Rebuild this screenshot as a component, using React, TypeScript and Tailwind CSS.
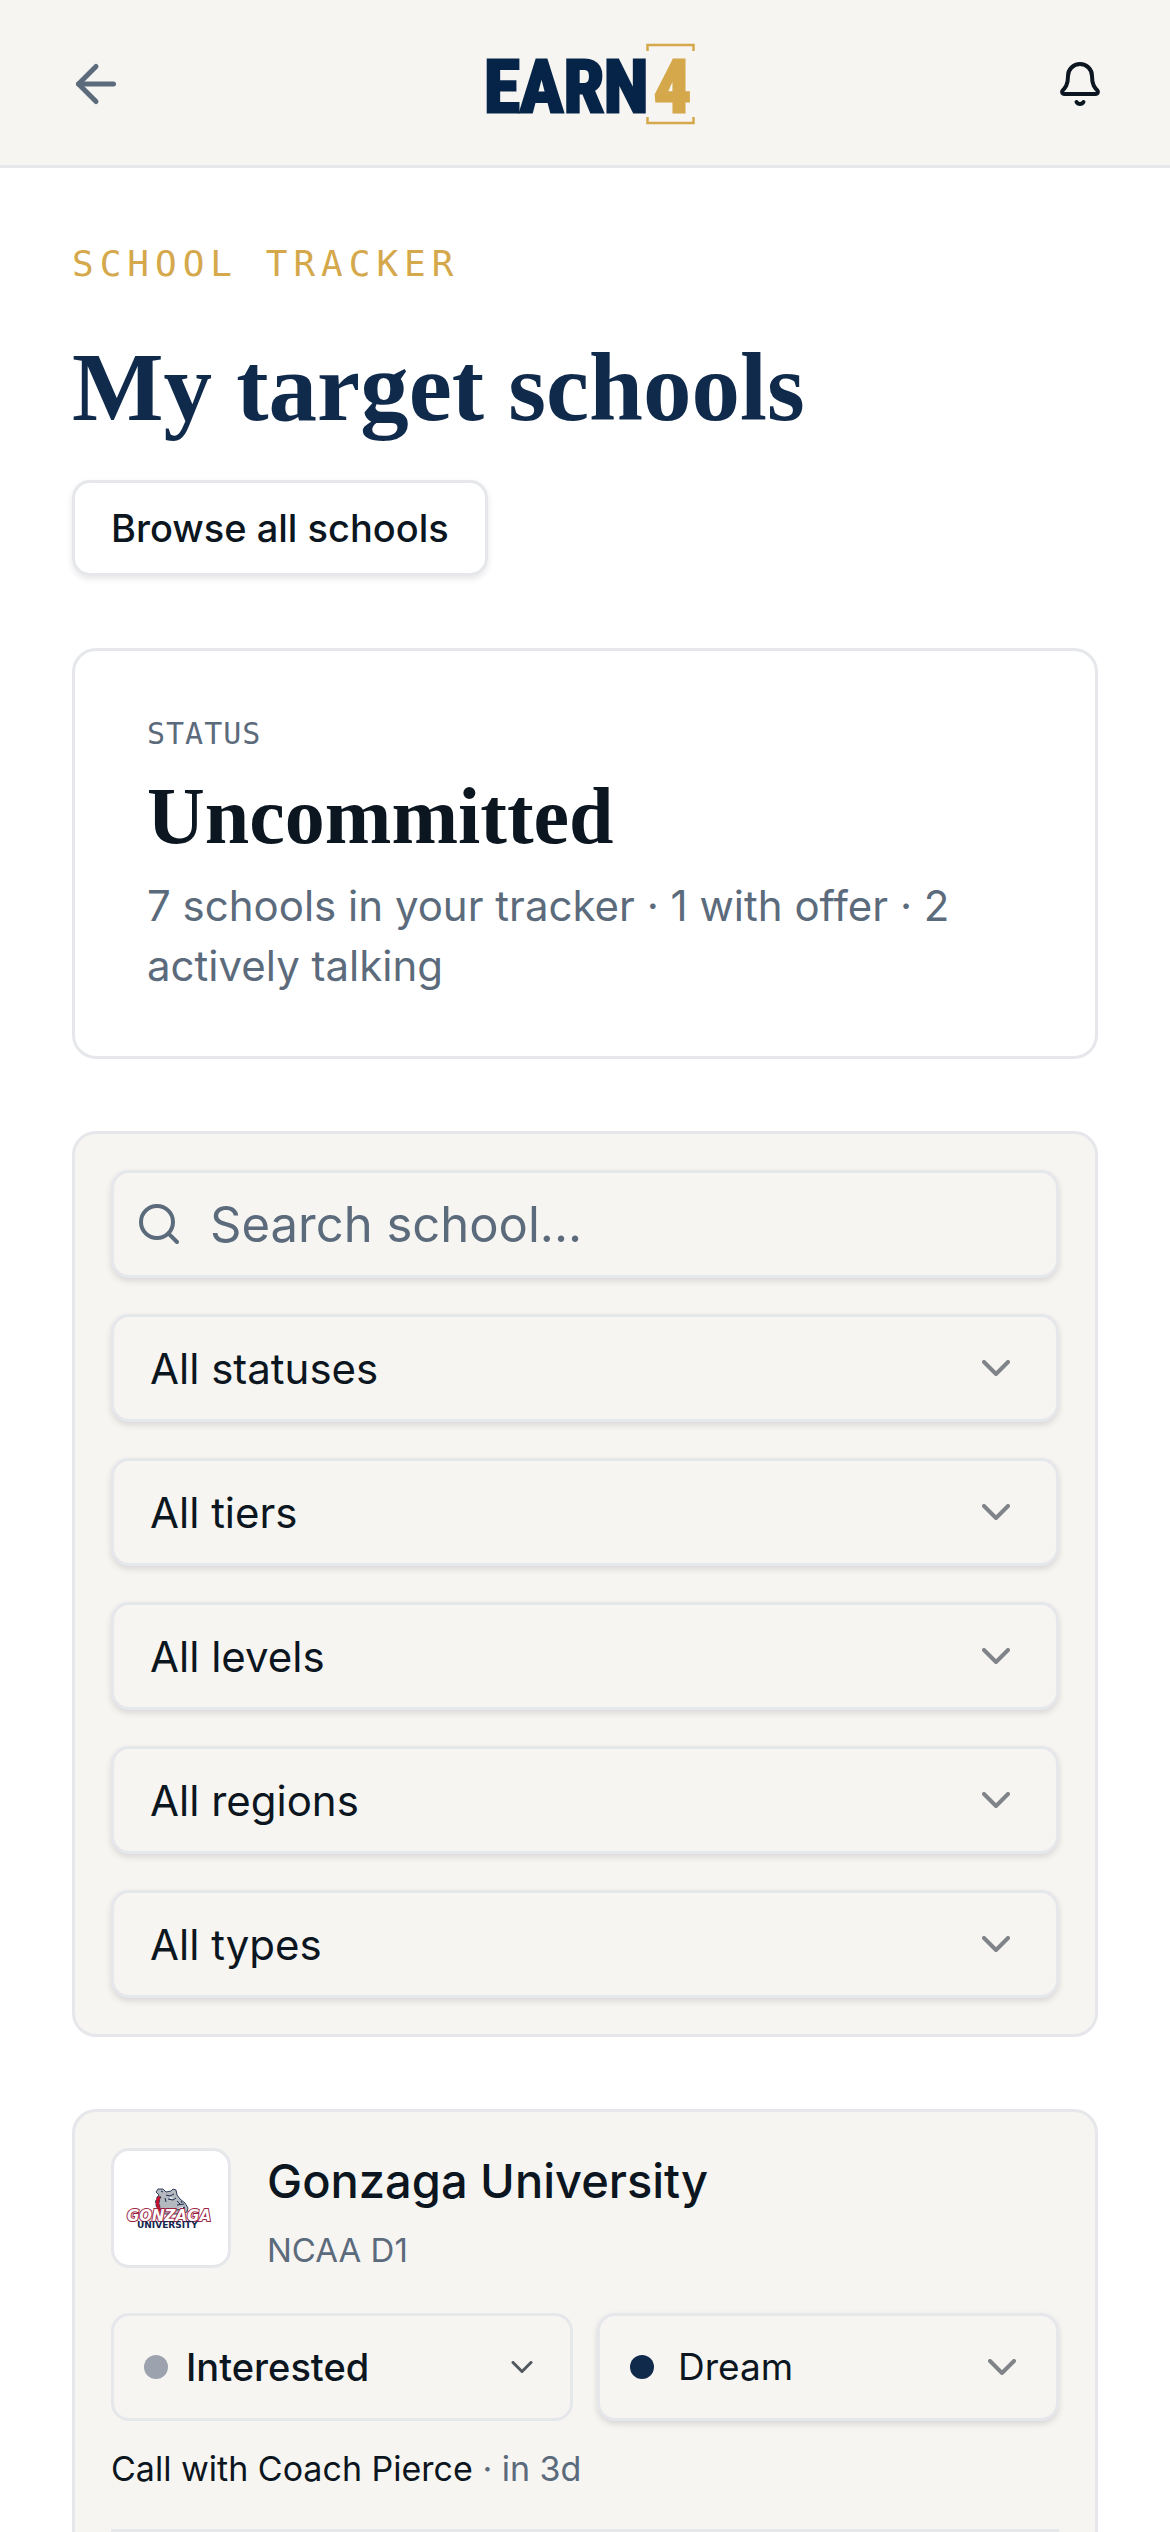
import { ArrowLeft, Bell, ChevronDown, Search } from "lucide-react";

const fieldClass =
  "h-27 w-full rounded-[18px] border-3 border-[#e5e7eb] bg-[#f7f5f2] shadow-[0_3px_6px_rgba(0,0,0,0.12)] outline-none";

function BrandLogo() {
  return (
    <svg viewBox="0 0 216 96" className="h-24 w-[216px]" role="img" aria-label="Earn4">
      <text
        x="1"
        y="76"
        fill="#062447"
        stroke="#062447"
        strokeWidth="3"
        className="font-['Roboto_Condensed','Liberation_Sans_Narrow','Liberation_Sans',sans-serif] text-[73px] font-bold"
      >
        EARN
      </text>
      <text
        x="171"
        y="76"
        fill="#d4a84b"
        stroke="#d4a84b"
        strokeWidth="3"
        className="font-['Roboto_Condensed','Liberation_Sans_Narrow','Liberation_Sans',sans-serif] text-[73px] font-bold"
      >
        4
      </text>
      <path
        d="M164.5 15V9H210.500V15M164.500 81V87H210.500V81"
        fill="none"
        stroke="#d4a84b"
        strokeWidth="2.500"
      />
    </svg>
  );
}

function GonzagaLogo() {
  return (
    <svg viewBox="0 0 90 42" className="h-[42px] w-[90px]" role="img" aria-label="Gonzaga University logo">
      <path d="M33 8 30 5l2-3 5 0 3 3 5-1 2-2 3 1 1 5 3 4 5 4 3 5-1 4-5 2H37l-5-5-2-7z" fill="#b4b9bf" stroke="#1d2d4f" strokeWidth="0.900" />
      <path d="M32 9c-4 5-3 12 3 17l2-1c-4-5-5-10-2-15z" fill="#c8102e" stroke="#1d2d4f" strokeWidth="0.800" strokeDasharray="3 1.500" />
      <path d="M40 8l4 1 4-2M42 12l5 1 3-2M51 14l3 3M51 18l7-1M46 22l5 1 8-3M39 11l1 4M55 14l1 2M37 5l-2-1" fill="none" stroke="#1d2d4f" strokeWidth="1" />
      <path d="M44 10l3 1-1 1-2-1zM52 21l5-1v1l-4 1z" fill="#fff" />
      <text
        x="1"
        y="34"
        fill="#fff"
        stroke="#9c2444"
        strokeWidth="2"
        paintOrder="stroke"
        className="font-['DejaVu_Sans',sans-serif] text-[15px] font-bold italic"
      >
        GONZAGA
      </text>
      <text x="11" y="41" fill="#14264d" className="font-['DejaVu_Sans',sans-serif] text-[9px] font-bold">
        UNIVERSITY
      </text>
    </svg>
  );
}

function FilterSelect({ label }: { label: string }) {
  return (
    <div className="relative">
      <select aria-label={label} className={`${fieldClass} appearance-none px-9 text-[42px]`}>
        <option>{label}</option>
      </select>
      <ChevronDown className="pointer-events-none absolute top-[30px] right-[39px] size-12 opacity-50" />
    </div>
  );
}

export default function App() {
  return (
    <div className="flex h-screen flex-col bg-white font-['Inter',sans-serif] text-[#0b1620]">
      <header className="flex h-42 shrink-0 items-center justify-between border-b-3 border-[#e5e7eb] bg-[#f7f5f2] px-[66px] pt-[3px]">
        <button aria-label="Back" className="text-[#5b6b7c]">
          <ArrowLeft className="size-15" />
        </button>
        <BrandLogo />
        <button aria-label="Notifications" className="flex w-12">
          <Bell className="size-12" />
        </button>
      </header>

      <main className="flex-1 overflow-y-auto px-18 pt-18 [scrollbar-width:none]">
        <p className="font-['DejaVu_Sans_Mono',monospace] text-[36px] leading-12 tracking-[6px] text-[#d4a84b] uppercase">
          School tracker
        </p>
        <h1 className="mt-10 font-['Liberation_Serif',serif] text-[97px] leading-[120px] font-bold text-[#102a4c]">
          My target schools
        </h1>
        <a
          href="#schools"
          className="mt-8 inline-flex h-24 items-center rounded-[18px] border-3 border-[#e5e7eb] px-9 text-[38px] font-medium shadow-[0_3px_6px_rgba(0,0,0,0.1)]"
        >
          Browse all schools
        </a>

        <section className="mt-18 rounded-3xl border-3 border-[#e5e7eb] px-18 pt-[63px] pb-15">
          <p className="font-['DejaVu_Sans_Mono',monospace] text-[30px] leading-10 tracking-[1px] text-[#5b6b7c]">STATUS</p>
          <h2 className="mt-[14px] font-['Liberation_Serif',serif] text-[80px] leading-24 font-bold">Uncommitted</h2>
          <p className="mt-3 text-[42px] leading-15 text-[#5b6b7c]">
            7 schools in your tracker · 1 with offer · 2 actively talking
          </p>
        </section>

        <section className="mt-18 flex flex-col gap-9 rounded-3xl border-3 border-[#e5e7eb] bg-[#f7f5f2] p-9">
          <div className="relative">
            <Search className="pointer-events-none absolute top-[30px] left-6 size-12 text-[#5b6b7c]" />
            <input
              type="search"
              aria-label="Search school"
              placeholder="Search school..."
              className={`${fieldClass} pr-9 pl-24 text-[49px] placeholder:text-[#5b6b7c]`}
            />
          </div>
          <FilterSelect label="All statuses" />
          <FilterSelect label="All tiers" />
          <FilterSelect label="All levels" />
          <FilterSelect label="All regions" />
          <FilterSelect label="All types" />
        </section>

        <article id="schools" className="mt-18 rounded-3xl border-3 border-[#e5e7eb] bg-[#f7f5f2] p-9">
          <div className="flex gap-9">
            <div className="flex size-30 items-center justify-center rounded-[18px] border-3 border-[#e5e7eb] bg-white">
              <GonzagaLogo />
            </div>
            <div>
              <h3 className="text-[47px] leading-[66px] font-medium">Gonzaga University</h3>
              <p className="mt-3 text-[33px] leading-12 text-[#5b6b7c]">NCAA D1</p>
            </div>
          </div>

          <div className="mt-[39px] grid grid-cols-2 gap-6">
            <button className="flex h-27 items-center gap-[18px] rounded-[18px] border-3 border-[#e5e7eb] px-[30px] text-[38px] font-medium">
              <span className="size-6 rounded-full bg-[#9ca3af]" />
              <span className="flex-1 text-left">Interested</span>
              <ChevronDown className="size-9 opacity-70" />
            </button>
            <div className="relative">
              <span className="pointer-events-none absolute top-[42px] left-[33px] size-6 rounded-full bg-[#102a4c]" />
              <select aria-label="Tier" className={`${fieldClass} appearance-none pr-20 pl-[78px] text-[37px]`}>
                <option>Dream</option>
              </select>
              <ChevronDown className="pointer-events-none absolute top-[30px] right-[33px] size-12 opacity-50" />
            </div>
          </div>

          <p className="mt-6 mb-9 text-[34px] leading-12">
            Call with Coach Pierce <span className="text-[#5b6b7c]">· in 3d</span>
          </p>
          <hr className="border-t-3 border-[#e5e7eb]" />
        </article>
      </main>
    </div>
  );
}
